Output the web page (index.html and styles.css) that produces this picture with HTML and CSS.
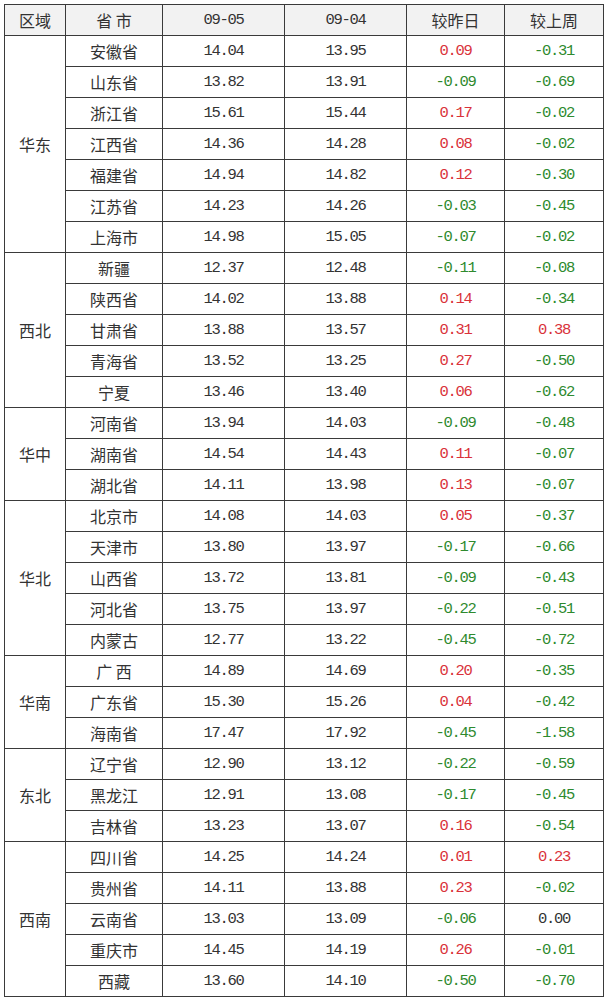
FILE: index.html
```html
<!DOCTYPE html>
<html lang="zh">
<head>
<meta charset="utf-8">
<link rel="stylesheet" href="styles.css">
</head>
<body>
<table class="price-table">
<colgroup>
<col class="c-region"><col class="c-prov"><col class="c-d1"><col class="c-d2"><col class="c-chg"><col class="c-wk">
</colgroup>
<thead>
<tr><th>区域</th><th>省 市</th><th class="num">09-05</th><th class="num">09-04</th><th>较昨日</th><th>较上周</th></tr>
</thead>
<tbody>
<tr><td class="region" rowspan="7">华东</td><td>安徽省</td><td class="num">14.04</td><td class="num">13.95</td><td class="num up">0.09</td><td class="num down">-0.31</td></tr>
<tr><td>山东省</td><td class="num">13.82</td><td class="num">13.91</td><td class="num down">-0.09</td><td class="num down">-0.69</td></tr>
<tr><td>浙江省</td><td class="num">15.61</td><td class="num">15.44</td><td class="num up">0.17</td><td class="num down">-0.02</td></tr>
<tr><td>江西省</td><td class="num">14.36</td><td class="num">14.28</td><td class="num up">0.08</td><td class="num down">-0.02</td></tr>
<tr><td>福建省</td><td class="num">14.94</td><td class="num">14.82</td><td class="num up">0.12</td><td class="num down">-0.30</td></tr>
<tr><td>江苏省</td><td class="num">14.23</td><td class="num">14.26</td><td class="num down">-0.03</td><td class="num down">-0.45</td></tr>
<tr><td>上海市</td><td class="num">14.98</td><td class="num">15.05</td><td class="num down">-0.07</td><td class="num down">-0.02</td></tr>

<tr><td class="region" rowspan="5">西北</td><td>新疆</td><td class="num">12.37</td><td class="num">12.48</td><td class="num down">-0.11</td><td class="num down">-0.08</td></tr>
<tr><td>陕西省</td><td class="num">14.02</td><td class="num">13.88</td><td class="num up">0.14</td><td class="num down">-0.34</td></tr>
<tr><td>甘肃省</td><td class="num">13.88</td><td class="num">13.57</td><td class="num up">0.31</td><td class="num up">0.38</td></tr>
<tr><td>青海省</td><td class="num">13.52</td><td class="num">13.25</td><td class="num up">0.27</td><td class="num down">-0.50</td></tr>
<tr><td>宁夏</td><td class="num">13.46</td><td class="num">13.40</td><td class="num up">0.06</td><td class="num down">-0.62</td></tr>

<tr><td class="region" rowspan="3">华中</td><td>河南省</td><td class="num">13.94</td><td class="num">14.03</td><td class="num down">-0.09</td><td class="num down">-0.48</td></tr>
<tr><td>湖南省</td><td class="num">14.54</td><td class="num">14.43</td><td class="num up">0.11</td><td class="num down">-0.07</td></tr>
<tr><td>湖北省</td><td class="num">14.11</td><td class="num">13.98</td><td class="num up">0.13</td><td class="num down">-0.07</td></tr>

<tr><td class="region" rowspan="5">华北</td><td>北京市</td><td class="num">14.08</td><td class="num">14.03</td><td class="num up">0.05</td><td class="num down">-0.37</td></tr>
<tr><td>天津市</td><td class="num">13.80</td><td class="num">13.97</td><td class="num down">-0.17</td><td class="num down">-0.66</td></tr>
<tr><td>山西省</td><td class="num">13.72</td><td class="num">13.81</td><td class="num down">-0.09</td><td class="num down">-0.43</td></tr>
<tr><td>河北省</td><td class="num">13.75</td><td class="num">13.97</td><td class="num down">-0.22</td><td class="num down">-0.51</td></tr>
<tr><td>内蒙古</td><td class="num">12.77</td><td class="num">13.22</td><td class="num down">-0.45</td><td class="num down">-0.72</td></tr>

<tr><td class="region" rowspan="3">华南</td><td>广 西</td><td class="num">14.89</td><td class="num">14.69</td><td class="num up">0.20</td><td class="num down">-0.35</td></tr>
<tr><td>广东省</td><td class="num">15.30</td><td class="num">15.26</td><td class="num up">0.04</td><td class="num down">-0.42</td></tr>
<tr><td>海南省</td><td class="num">17.47</td><td class="num">17.92</td><td class="num down">-0.45</td><td class="num down">-1.58</td></tr>

<tr><td class="region" rowspan="3">东北</td><td>辽宁省</td><td class="num">12.90</td><td class="num">13.12</td><td class="num down">-0.22</td><td class="num down">-0.59</td></tr>
<tr><td>黑龙江</td><td class="num">12.91</td><td class="num">13.08</td><td class="num down">-0.17</td><td class="num down">-0.45</td></tr>
<tr><td>吉林省</td><td class="num">13.23</td><td class="num">13.07</td><td class="num up">0.16</td><td class="num down">-0.54</td></tr>

<tr><td class="region" rowspan="5">西南</td><td>四川省</td><td class="num">14.25</td><td class="num">14.24</td><td class="num up">0.01</td><td class="num up">0.23</td></tr>
<tr><td>贵州省</td><td class="num">14.11</td><td class="num">13.88</td><td class="num up">0.23</td><td class="num down">-0.02</td></tr>
<tr><td>云南省</td><td class="num">13.03</td><td class="num">13.09</td><td class="num down">-0.06</td><td class="num">0.00</td></tr>
<tr><td>重庆市</td><td class="num">14.45</td><td class="num">14.19</td><td class="num up">0.26</td><td class="num down">-0.01</td></tr>
<tr><td>西藏</td><td class="num">13.60</td><td class="num">14.10</td><td class="num down">-0.50</td><td class="num down">-0.70</td></tr>
</tbody>
</table>
</body>
</html>
```
FILE: styles.css
```css
html, body {
  margin: 0;
  padding: 0;
  background: #ffffff;
}
body {
  padding: 4px 0 0 4px;
}
.price-table {
  border-collapse: collapse;
  table-layout: fixed;
  width: 600px;
  font-family: "Noto Sans CJK SC", "Liberation Sans", sans-serif;
  font-size: 16px;
  color: #333333;
}
.c-region { width: 61px; }
.c-prov { width: 97px; }
.c-d1 { width: 122px; }
.c-d2 { width: 122px; }
.c-chg { width: 98px; }
.c-wk { width: 99px; }
.price-table th,
.price-table td {
  border: 1px solid #3a3a3a;
  height: 30px;
  padding: 0;
  text-align: center;
  vertical-align: middle;
  font-weight: normal;
  line-height: 20px;
  white-space: pre;
}
.price-table thead th {
  background: #f2f2f2;
}
.num {
  font-family: "Liberation Mono", monospace;
  font-size: 15.5px;
  letter-spacing: -1.3px;
}
.up { color: #d9323a; }
.down { color: #2e8a2e; }
.region { }
```
